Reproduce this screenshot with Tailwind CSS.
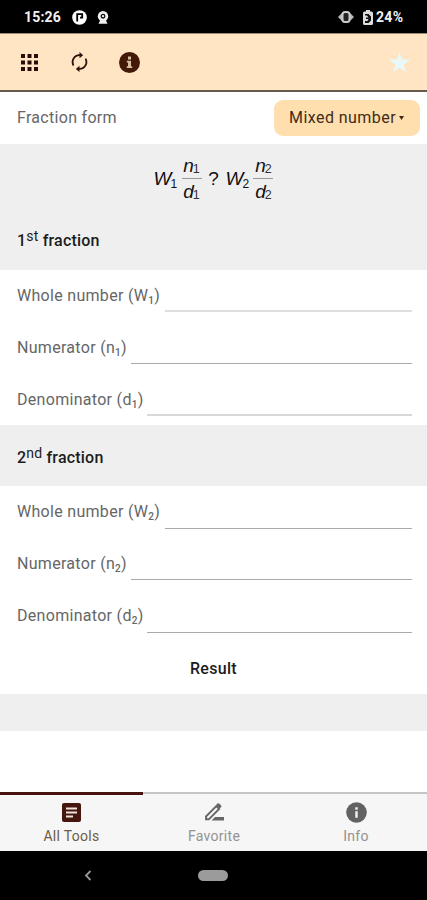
<!DOCTYPE html>
<html lang="en">
<head>
<meta charset="utf-8">
<title>Fraction comparison</title>
<script src="https://cdn.jsdelivr.net/npm/@tailwindcss/browser@4"></script>
</head>
<body class="w-[427px] h-[900px] overflow-hidden bg-white font-[Roboto,sans-serif] flex flex-col text-[16px] tracking-[0.3px] text-[#666]">
<div class="h-[33px] shrink-0 bg-black text-[#f0f0f0] flex items-center pl-6 pr-[22px] pt-[2px]">
  <span class="text-[14px] font-bold tracking-[0.2px] w-[48px]">15:26</span>
  <svg class="w-[15px] h-[15px]" viewBox="0 0 15 15"><circle cx="7.5" cy="7.5" r="7.3" fill="#fff"/><path d="M5.2 3.2v8.2M5.2 4.2h5v3.5H8" fill="none" stroke="#000" stroke-width="1.8"/></svg>
  <svg class="w-[12px] h-[13px] ml-[10px]" viewBox="0 0 12 13"><circle cx="6" cy="5.2" r="5.2" fill="#eee"/><circle cx="6" cy="5.2" r="1.8" fill="#eee" stroke="#111" stroke-width="1.3"/><path d="M1.500 12.800 3.300 9h5.400l1.800 3.800z" fill="#eee"/></svg>
  <svg class="w-[16px] h-[12px] ml-auto -translate-y-px" viewBox="0 0 16 12"><path d="M0 6 4 2v8zM16 6l-4-4v8z" fill="#bbb"/><rect x="4.500" y="1" width="7" height="10" rx="2.500" fill="#222" stroke="#ccc" stroke-width="2"/></svg>
  <svg class="w-[10px] h-[15px] ml-[9px]" viewBox="0 0 10 15"><path d="M3 0h4v1.500h1.500Q10 1.500 10 3v10.500Q10 15 8.500 15h-7Q0 15 0 13.500V3q0-1.500 1.500-1.500H3z" fill="#ddd"/><path d="M2 4h3.500L8 6.500v4L5.500 13H2v-2h2.500l1-2H3V7.500h2.500L4 5.500H2z" fill="#111"/></svg>
  <span class="text-[14px] font-bold tracking-[0.3px] ml-[3px] w-[29px] whitespace-nowrap">24%</span>
</div>
<div class="h-[59px] shrink-0 bg-[#ffe5c3] border-t border-t-[#9b8b76] border-b-2 border-b-[#665a4b] flex items-center pl-[21px] pr-[17px]">
  <svg class="w-[17px] h-[17px]" viewBox="0 0 17 17" fill="#2b0b05"><rect width="4" height="4"/><rect x="6.500" width="4" height="4"/><rect x="13" width="4" height="4"/><rect y="6.500" width="4" height="4"/><rect x="6.500" y="6.500" width="4" height="4"/><rect x="13" y="6.500" width="4" height="4"/><rect y="13" width="4" height="4"/><rect x="6.500" y="13" width="4" height="4"/><rect x="13" y="13" width="4" height="4"/></svg>
  <svg class="w-[23px] h-[22px] ml-[30px]" viewBox="0 0 24 24" fill="#2b1208"><path d="M12 5.500V8l4-3.500L12 1v2.500a8.500 8.500 0 0 0-7.200 13l1.400-1.400A6.500 6.500 0 0 1 12 5.500zm7.200 2L17.800 8.900A6.500 6.500 0 0 1 12 18.500V16l-4 3.500 4 3.500v-2.500a8.500 8.500 0 0 0 7.200-13z"/></svg>
  <svg class="w-[21px] h-[21px] ml-[28px]" viewBox="0 0 21 21"><circle cx="10.500" cy="10.500" r="10.500" fill="#431a08"/><path d="M9 4.500h3v3H9zM7.800 8.700H12v5.500h1.200V16H7.800v-1.800H9v-3.700H7.800z" fill="#d8bda0"/></svg>
  <svg class="w-[21px] h-[20px] ml-auto" viewBox="0 0 20 19"><path d="m10 0 2.400 6.900 7.600.4-6 4.700 2.200 7L10 15.200 3.800 19 6 12 0 7.300l7.600-.4z" fill="#eaf9f8"/></svg>
</div>
<div class="h-[52px] shrink-0 flex items-center justify-between pl-[17px] pr-[7px]">
  <span>Fraction form</span>
  <div class="h-[36px] w-[146px] rounded-[9px] bg-[#ffdfae] text-[#422b18] flex items-center pl-[15px] tracking-[0.45px] whitespace-nowrap">Mixed number<svg class="w-[5px] h-[4px] ml-[3px]" viewBox="0 0 5 4"><path d="M0 0h5L2.500 4z" fill="#422b18"/></svg></div>
</div>
<div class="h-[126px] shrink-0 bg-[#efefef] flex flex-col">
  <div class="h-[70px] flex items-center justify-center font-['Liberation_Sans',sans-serif] text-[#111] text-[19px] tracking-normal">
    <i>W</i><span class="text-[12px] translate-y-[5px] w-[8px] -ml-px">1</span>
    <div class="flex flex-col items-center w-[20px] ml-[3px] leading-[21px]"><div class="h-[22px] -translate-y-[1px] flex"><i>n</i><span class="text-[12.500px] translate-y-[4px] text-[#333] -ml-px">1</span></div><div class="h-px w-[20px] bg-[#999]"></div><div class="h-[23px] pt-[2px] flex"><i>d</i><span class="text-[12.500px] translate-y-[4px] text-[#333] -ml-px">1</span></div></div>
    <span class="w-[12px] mx-[6px] text-center">?</span>
    <i>W</i><span class="text-[12px] translate-y-[5px] w-[8px] -ml-px">2</span>
    <div class="flex flex-col items-center w-[20px] ml-[3px] leading-[21px]"><div class="h-[22px] -translate-y-[1px] flex"><i>n</i><span class="text-[12.500px] translate-y-[4px] text-[#333] -ml-px">2</span></div><div class="h-px w-[20px] bg-[#999]"></div><div class="h-[23px] pt-[2px] flex"><i>d</i><span class="text-[12.500px] translate-y-[4px] text-[#333] -ml-px">2</span></div></div>
  </div>
  <div class="h-[54px] pl-[17px] leading-[54px] font-medium text-[#1c1c1c] text-[16px] tracking-[0.2px]">1<sup class="text-[14px] font-normal leading-none -top-[5px]">st</sup> fraction</div>
</div>
<div class="h-[155px] shrink-0 flex flex-col pl-[17px] pr-[15px]">
  <div class="h-[52px] flex"><span class="w-[148px] leading-[52px] whitespace-nowrap">Whole number (W<sub class="text-[10px] font-medium leading-none">1</sub>)</span><div class="flex-1 h-[42px] border-b-2 border-[#dedede]"></div></div>
  <div class="h-[52px] flex"><span class="w-[114px] leading-[51px] whitespace-nowrap">Numerator (n<sub class="text-[10px] font-medium leading-none">1</sub>)</span><div class="flex-1 h-[42px] border-b border-[#aaa]"></div></div>
  <div class="h-[51px] flex"><span class="w-[130px] leading-[51px] whitespace-nowrap">Denominator (d<sub class="text-[10px] font-medium leading-none">1</sub>)</span><div class="flex-1 h-[42px] border-b-2 border-[#d8d8d8]"></div></div>
</div>
<div class="h-[61px] shrink-0 bg-[#efefef] pl-[17px] leading-[65px] font-medium text-[#1c1c1c] text-[16px] tracking-[0.2px]">2<sup class="text-[14px] font-normal leading-none -top-[5px]">nd</sup> fraction</div>
<div class="h-[156px] shrink-0 flex flex-col pl-[17px] pr-[15px]">
  <div class="h-[52px] flex"><span class="w-[148px] leading-[52px] whitespace-nowrap">Whole number (W<sub class="text-[10px] font-medium leading-none">2</sub>)</span><div class="flex-1 h-[43px] border-b border-[#aaa]"></div></div>
  <div class="h-[52px] flex"><span class="w-[114px] leading-[52px] whitespace-nowrap">Numerator (n<sub class="text-[10px] font-medium leading-none">2</sub>)</span><div class="flex-1 h-[42px] border-b border-[#aaa]"></div></div>
  <div class="h-[52px] flex"><span class="w-[130px] leading-[51px] whitespace-nowrap">Denominator (d<sub class="text-[10px] font-medium leading-none">2</sub>)</span><div class="flex-1 h-[43px] border-b border-[#aaa]"></div></div>
</div>
<div class="h-[52px] shrink-0 text-center leading-[53px] font-medium text-[#1c1c1c] text-[16px] tracking-[0.3px]">Result</div>
<div class="h-[37px] shrink-0 bg-[#efefef]"></div>
<div class="h-[61px] shrink-0"></div>
<div class="h-[59px] shrink-0 bg-[#f6f6f6] grid grid-cols-[143px_142px_142px] text-[14px] leading-[18px] text-[#929292] tracking-[0.3px]">
  <div class="border-t-[3px] border-[#4a1111] flex flex-col items-center pt-[8px] text-[#6f5b45]">
    <svg class="w-[19px] h-[19px]" viewBox="0 0 19 19"><rect width="19" height="19" rx="2" fill="#45160e"/><path d="M4 5.500h11M4 9.500h11M4 13.500h7" stroke="#eee3da" stroke-width="2.200"/></svg>
    <span class="mt-[5px]">All Tools</span>
  </div>
  <div class="border-t-2 border-[#c5c5c5] flex flex-col items-center pt-[9px]">
    <svg class="w-[20px] h-[19px]" viewBox="0 0 20 19"><path d="M2 13.500 12.300 3.200l2.800 2.800L4.800 16.300H2z" fill="none" stroke="#666" stroke-width="1.900"/><path d="m12 2 1.500-1.500q.8-.7 1.600 0l2 2q.8.800 0 1.600L15.600 5.600zM11 14h9v3.500H7.500z" fill="#666"/></svg>
    <span class="mt-[5px]">Favorite</span>
  </div>
  <div class="border-t-2 border-[#c5c5c5] flex flex-col items-center pt-[8px]">
    <svg class="w-[21px] h-[21px]" viewBox="0 0 21 21"><circle cx="10.500" cy="10.500" r="10.300" fill="#626262"/><path d="M9.300 5.200h2.400v2.500H9.300zM9.300 9.200h2.400v6.500H9.300z" fill="#f4f4f4"/></svg>
    <span class="mt-[4px]">Info</span>
  </div>
</div>
<div class="h-[49px] shrink-0 bg-black grid grid-cols-3 items-center justify-items-center">
  <svg class="w-[8px] h-[11px] translate-x-[17px]" viewBox="0 0 8 11"><path d="M6.500 1 2 5.500 6.500 10" fill="none" stroke="#999" stroke-width="1.800"/></svg>
  <div class="w-[30px] h-[11px] rounded-full bg-[#9b9b9b]"></div>
</div>
</body>
</html>
